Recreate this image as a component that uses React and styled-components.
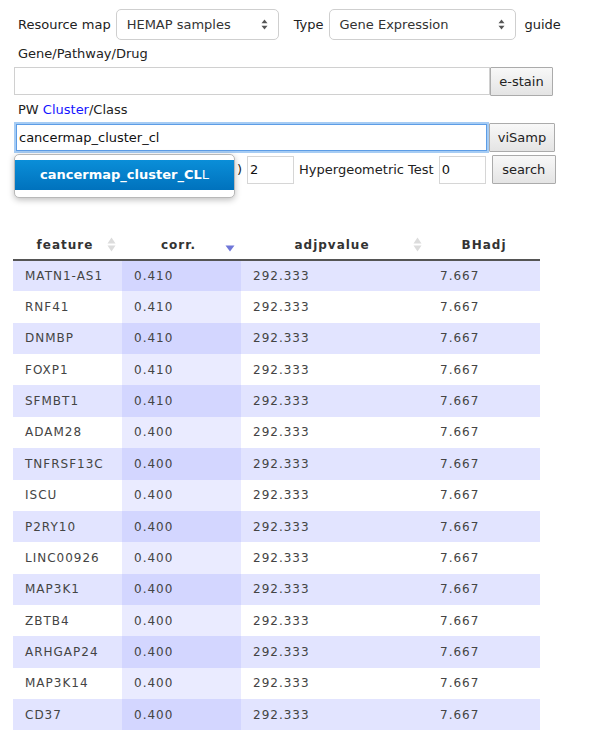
import React from "react";
import styled, { createGlobalStyle } from "styled-components";

const rows = [
  ["MATN1-AS1", "0.410"],
  ["RNF41", "0.410"],
  ["DNMBP", "0.410"],
  ["FOXP1", "0.410"],
  ["SFMBT1", "0.410"],
  ["ADAM28", "0.400"],
  ["TNFRSF13C", "0.400"],
  ["ISCU", "0.400"],
  ["P2RY10", "0.400"],
  ["LINC00926", "0.400"],
  ["MAP3K1", "0.400"],
  ["ZBTB4", "0.400"],
  ["ARHGAP24", "0.400"],
  ["MAP3K14", "0.400"],
  ["CD37", "0.400"],
];

const UpDown = () => (
  <svg width="7" height="11" viewBox="0 0 7 11">
    <path d="M3.5 0.5 L6.5 4.2 L0.5 4.2 Z" fill="#555" />
    <path d="M3.5 10.5 L6.5 6.8 L0.5 6.8 Z" fill="#555" />
  </svg>
);

const SortBoth = () => (
  <svg width="9" height="15" viewBox="0 0 9 15">
    <path d="M4.5 0.5 L8.5 6.5 L0.5 6.5 Z" fill="#dcdcdc" />
    <path d="M4.5 14.5 L8.5 8.5 L0.5 8.5 Z" fill="#dcdcdc" />
  </svg>
);

const SortDesc = () => (
  <svg width="10" height="7" viewBox="0 0 10 7">
    <path d="M0.5 0.5 L9.5 0.5 L5 6.5 Z" fill="#6f76d8" />
  </svg>
);

const App = () => {
  return (
    <>
      <GlobalStyle />
      <Page>
        <Form>
          <Row>
            <Label>Resource map</Label>
            <SelectBox width={163}>
              <span>HEMAP samples</span>
              <UpDown />
            </SelectBox>
            <Label style={{ marginLeft: 10 }}>Type</Label>
            <SelectBox width={187}>
              <span>Gene Expression</span>
              <UpDown />
            </SelectBox>
            <Label style={{ marginLeft: 4 }}>guide</Label>
          </Row>

          <Caption>Gene/Pathway/Drug</Caption>
          <InputRow>
            <TextInput width={476} />
            <Button width={63}>e-stain</Button>
          </InputRow>

          <Caption>
            PW <BlueLink>Cluster</BlueLink>/Class
          </Caption>
          <InputRow>
            <AutoWrap>
              <TextInput width={475} focused defaultValue="cancermap_cluster_cl" />
              <Menu>
                <MenuItem>
                  cancermap_cluster_CL<Light>L</Light>
                </MenuItem>
              </Menu>
            </AutoWrap>
            <Button width={66}>viSamp</Button>
          </InputRow>

          <ParamRow>
            <SmallBox width={35} offset={43} />
            <SmallBox width={47} offset={3} />
            <Paren>)</Paren>
            <NumInput defaultValue="2" />
            <Label>Hypergeometric Test</Label>
            <NumInput defaultValue="0" />
            <Button width={64} style={{ marginLeft: 1 }}>
              search
            </Button>
          </ParamRow>
        </Form>

        <Table>
          <thead>
            <tr>
              <Th width={109}>
                <ThInner>
                  <ThText>feature</ThText>
                  <SortBoth />
                </ThInner>
              </Th>
              <Th width={119}>
                <ThInner>
                  <ThText>corr.</ThText>
                  <DescWrap>
                    <SortDesc />
                  </DescWrap>
                </ThInner>
              </Th>
              <Th width={187}>
                <ThInner>
                  <ThText>adjpvalue</ThText>
                  <SortBoth />
                </ThInner>
              </Th>
              <Th width={112} plain>
                <ThText>BHadj</ThText>
              </Th>
            </tr>
          </thead>
          <tbody>
            {rows.map(([feature, corr], i) => (
              <Tr key={feature} odd={i % 2 === 0}>
                <Td>{feature}</Td>
                <Td sorted odd={i % 2 === 0}>
                  {corr}
                </Td>
                <Td>292.333</Td>
                <Td>7.667</Td>
              </Tr>
            ))}
          </tbody>
        </Table>
      </Page>
    </>
  );
};

export default App;

const GlobalStyle = createGlobalStyle`
  body {
    margin: 0;
    background: #fff;
    font-family: "DejaVu Sans", Verdana, sans-serif;
    color: #222;
  }
`;

const Page = styled.div`
  padding-top: 9px;
  width: 595px;
  height: 730px;
  overflow: hidden;
`;

const Form = styled.div`
  padding-left: 14px;
  font-size: 13px;
`;

const Row = styled.div`
  display: flex;
  align-items: center;
  height: 31px;
  gap: 5px;
`;

const Label = styled.span`
  font-size: 13px;
  color: #222;
  white-space: nowrap;
  &:first-child {
    margin-left: 4px;
  }
`;

const SelectBox = styled.div`
  display: flex;
  align-items: center;
  justify-content: space-between;
  box-sizing: border-box;
  width: ${(p) => p.width}px;
  height: 31px;
  padding: 0 10px 0 10px;
  border: 1px solid #cfcfcf;
  border-radius: 5px;
  background: #fff;
  color: #333;
  font-size: 13px;
`;

const Caption = styled.div`
  margin-top: 5px;
  padding-left: 4px;
  height: 18px;
  line-height: 18px;
  font-size: 13px;
  color: #222;
`;

const BlueLink = styled.span`
  color: #1515ff;
`;

const InputRow = styled.div`
  display: flex;
  align-items: stretch;
  margin-top: 4px;
  height: 29px;
`;

const TextInput = styled.input`
  box-sizing: border-box;
  width: ${(p) => p.width}px;
  height: 28px;
  margin: 0;
  padding: 0 2px;
  font-family: "DejaVu Sans", Verdana, sans-serif;
  font-size: 13px;
  color: #111;
  border: 1px solid ${(p) => (p.focused ? "#5d9de6" : "#d0d0d0")};
  box-shadow: ${(p) => (p.focused ? "0 0 0 2px #a6ccf4" : "none")};
  outline: none;
  background: #fff;
  ${(p) => (p.focused ? "height: 27px; margin: 1px 2px 0 2px; width: " + (p.width - 4) + "px;" : "")}
`;

const Button = styled.button`
  box-sizing: border-box;
  width: ${(p) => p.width}px;
  height: 29px;
  margin: 0;
  padding: 0;
  font-family: "DejaVu Sans", Verdana, sans-serif;
  font-size: 13px;
  color: #222;
  background: linear-gradient(#f8f8f8, #e4e4e4);
  border: 1px solid #ababab;
  border-radius: 1px;
`;

const AutoWrap = styled.div`
  position: relative;
  display: flex;
`;

const Menu = styled.div`
  position: absolute;
  left: 0;
  top: 31px;
  z-index: 5;
  box-sizing: border-box;
  width: 221px;
  height: 44px;
  padding: 5px 0 0 0;
  background: #fff;
  border: 1px solid #b8b8b8;
  border-radius: 5px;
  box-shadow: 0 2px 6px rgba(0, 0, 0, 0.25);
`;

const MenuItem = styled.div`
  height: 30px;
  line-height: 30px;
  text-align: center;
  color: #fff;
  font-weight: bold;
  font-size: 13px;
  background: linear-gradient(#0a8ed8, #0072bd);
`;

const Light = styled.span`
  font-weight: normal;
`;

const ParamRow = styled.div`
  display: flex;
  align-items: center;
  gap: 5px;
  margin-top: 3px;
  height: 29px;
`;

const SmallBox = styled.div`
  box-sizing: border-box;
  width: ${(p) => p.width}px;
  height: 28px;
  margin-left: ${(p) => p.offset}px;
  border: 1px solid #d0d0d0;
  border-radius: 4px;
  background: #fff;
`;

const Paren = styled.span`
  margin-left: 85px;
  font-size: 13px;
  color: #222;
`;

const NumInput = styled.input`
  box-sizing: border-box;
  width: 47px;
  height: 28px;
  margin: 0;
  padding: 0 2px;
  font-family: "DejaVu Sans", Verdana, sans-serif;
  font-size: 13px;
  color: #111;
  border: 1px solid #d6d6d6;
  outline: none;
`;

const Table = styled.table`
  margin: 46px 0 0 13px;
  border-collapse: collapse;
  table-layout: fixed;
  width: 527px;
  font-family: "DejaVu Sans", Verdana, sans-serif;
`;

const Th = styled.th`
  width: ${(p) => p.width}px;
  height: 30px;
  box-sizing: border-box;
  padding: ${(p) => (p.plain ? "0 12px" : "0 6px 0 10px")};
  border-bottom: 2px solid #555;
  font-size: 12px;
  font-weight: bold;
  color: #333;
  letter-spacing: 1px;
  text-align: center;
`;

const ThInner = styled.div`
  display: flex;
  align-items: center;
`;

const ThText = styled.span`
  flex: 1;
  text-align: center;
`;

const DescWrap = styled.span`
  display: flex;
  margin-top: 8px;
`;

const Tr = styled.tr`
  background: ${(p) => (p.odd ? "#e2e4ff" : "#fff")};
`;

const Td = styled.td`
  height: 31.36px;
  padding: 0 12px;
  font-size: 12px;
  letter-spacing: 1px;
  color: #444;
  box-sizing: border-box;
  background: ${(p) => (p.sorted ? (p.odd ? "#d3d6ff" : "#eaebff") : "transparent")};
`;
